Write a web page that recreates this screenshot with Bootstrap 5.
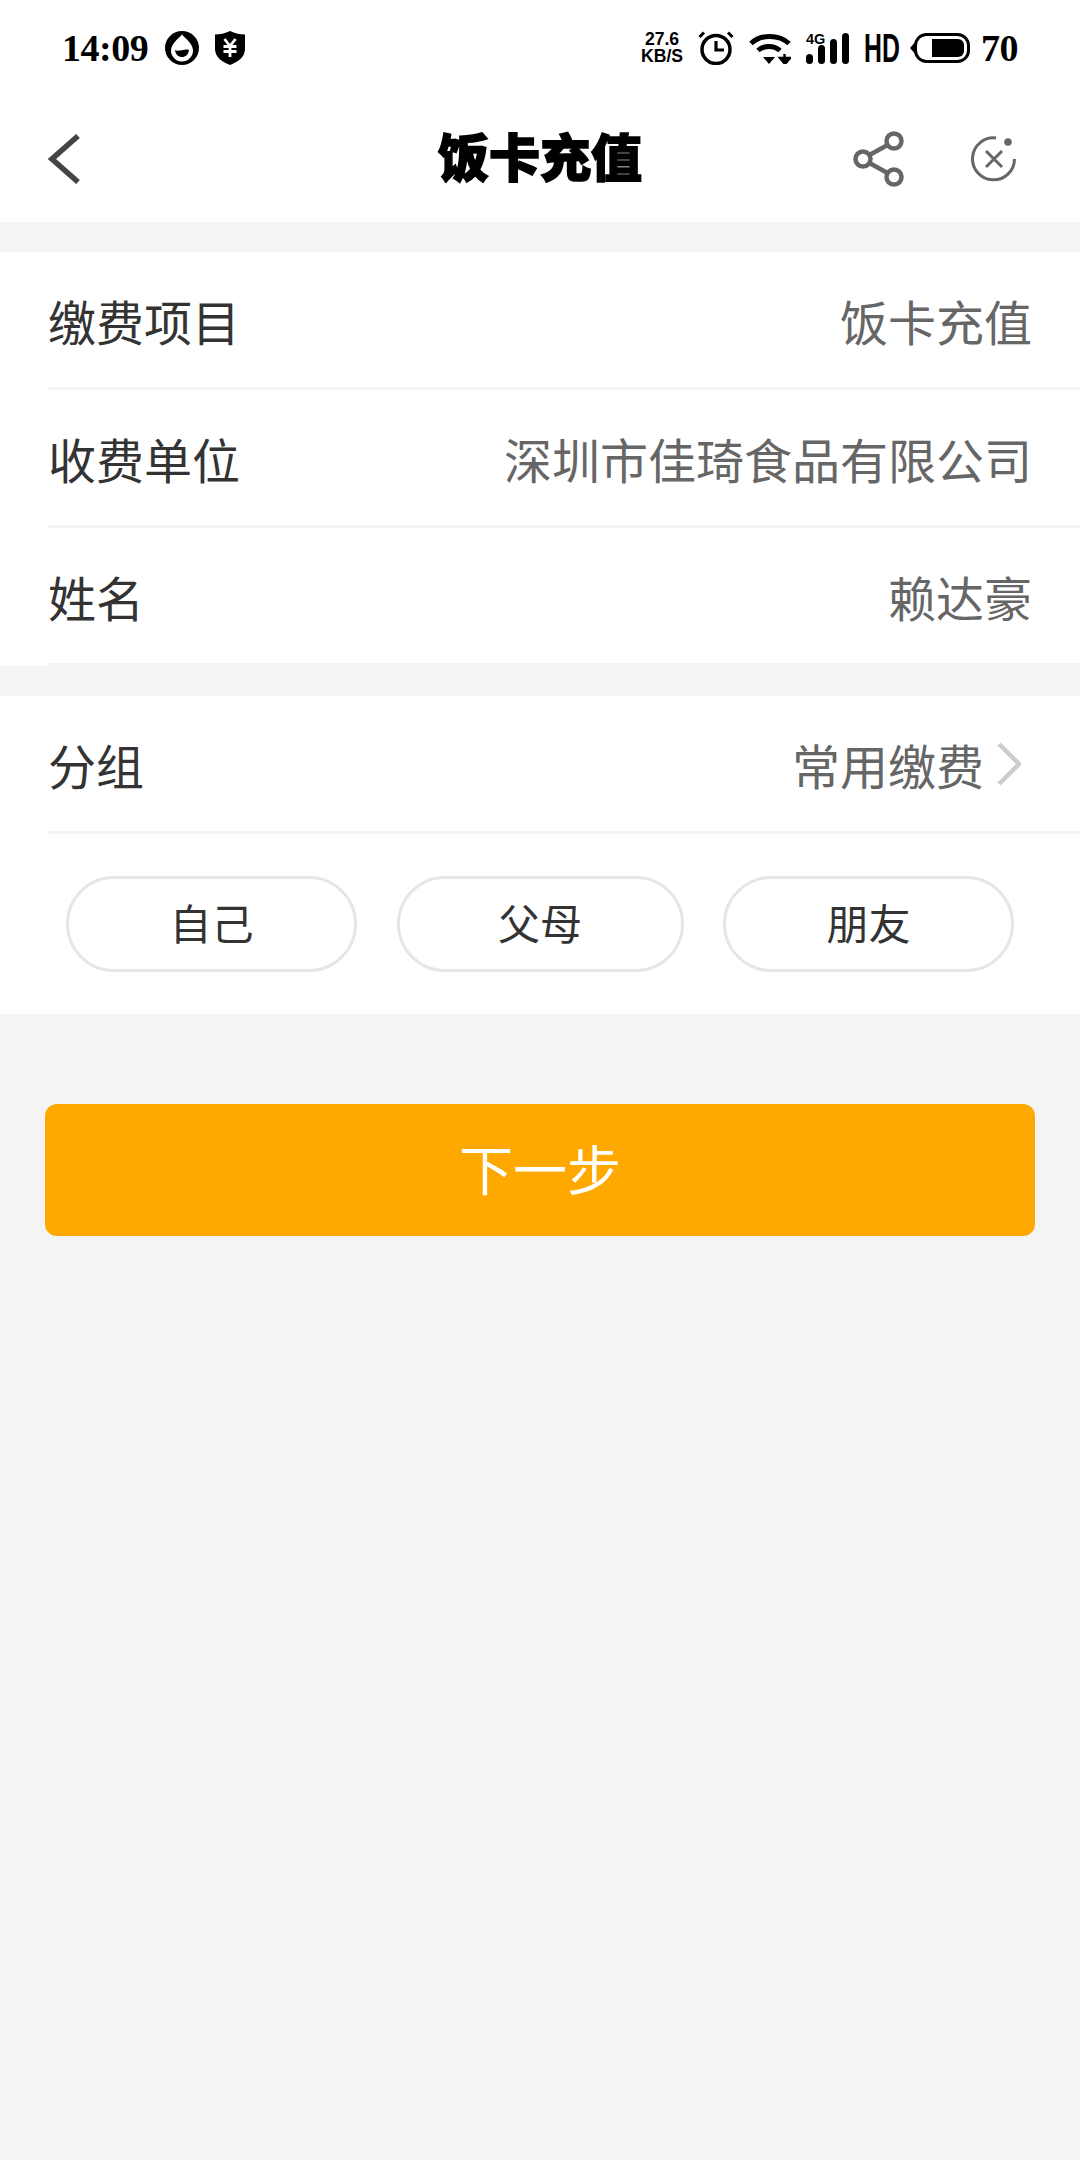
<!DOCTYPE html>
<html lang="zh">
<head>
<meta charset="utf-8">
<title>饭卡充值</title>
<link href="https://cdn.jsdelivr.net/npm/bootstrap@5.3.0/dist/css/bootstrap.min.css" rel="stylesheet">
<style>
html, body { background: #f4f4f4; }
body { width: 1080px; height: 2160px; overflow: hidden; font-family: "Noto Sans CJK SC", "Liberation Sans", sans-serif; }
svg { display: block; flex: none; }
.stat-bar { height: 96px; padding: 0 62px 0 62px; color: #000; }
.stat-time { font: 700 38px/1 "Liberation Serif", serif; letter-spacing: -.5px; }
.stat-group-left { gap: 17px; }
.stat-icons-left { gap: 16px; }
.stat-group-right { gap: 15px; }
.net-speed { width: 42px; font-family: "Liberation Sans", sans-serif; font-weight: 700; font-size: 17.6px; text-align: center; line-height: 17px; }
.sig-ico { margin-top: -3px; }
.hd-text { width: 31px; font: 700 40px/1 "Liberation Sans", sans-serif; transform: scaleX(.62); transform-origin: left center; white-space: nowrap; }
.batt-ico { margin-right: -4px; }
.nav-head { height: 126px; padding: 0 48px; }
.nav-side { flex: 1 1 0; }
.nav-right { gap: 67px; }
.close-ico { margin-right: 15px; }
.nav-title { margin-bottom: 8px; font-size: 51px; line-height: 1; font-weight: 900; color: #000; -webkit-text-stroke: 1.5px #000; }
.form-block { margin-top: 30px; }
.form-line { height: 138px; margin-left: 48px; padding-right: 48px; border-bottom: 3px solid #f4f4f4; font-size: 48px; line-height: 1; }
.form-key { color: #333; }
.form-val { color: #666; }
.chev-gap { gap: 13px; margin-right: 11px; }
.pill-row { padding: 42px 66px; }
.pill-btn { width: 291px; height: 96px; padding: 0 0 5px; border: 3px solid #e6e6e6; background: #fff; color: #333; font-size: 42px; line-height: 1; }
.pill-mid { width: 287px; }
.next-wrap { padding: 90px 45px 0; }
.next-btn { height: 132px; padding: 0 0 4px; border: 0; border-radius: 12px; background: #ffa900; color: #fff; font-size: 54px; line-height: 1; }
</style>
</head>
<body>
<div class="bg-white">
  <div class="stat-bar d-flex justify-content-between align-items-center">
    <div class="stat-group-left d-flex align-items-center">
      <span class="stat-time">14:09</span>
      <div class="stat-icons-left d-flex align-items-center">
        <svg width="34" height="34" viewBox="0 0 34 34"><circle cx="17" cy="17" r="17" fill="#000"/><path d="M17 3.500 C21 8 28 13 28 19.500 A11 11 0 0 1 6 19.500 C6 13 13 8 17 3.500Z" fill="#fff"/><path d="M10 19 C13 21.500 20 17 24 19 C23.500 23.500 20.500 26 17 26 C13.500 26 10.500 23.500 10 19Z" fill="#000"/></svg>
        <svg width="30" height="34" viewBox="0 0 30 34"><path d="M15 0 C20 2.500 25 3.500 30 3.500 V18 C30 26 23 31 15 34 C7 31 0 26 0 18 V3.500 C5 3.500 10 2.500 15 0Z" fill="#000"/><path d="M9.500 8 L15 15 L20.500 8 M8.500 15.500 H21.500 M8.500 20.500 H21.500 M15 15 V26" fill="none" stroke="#fff" stroke-width="2.800"/></svg>
      </div>
    </div>
    <div class="stat-group-right d-flex align-items-center">
      <div class="net-speed"><div>27.6</div><div>KB/S</div></div>
      <svg width="36" height="34" viewBox="0 0 36 34"><circle cx="18" cy="18.500" r="14" fill="none" stroke="#000" stroke-width="3.500"/><path d="M18 10 V19 H26" fill="none" stroke="#000" stroke-width="3.200"/><path d="M1.500 6 L6 1.500 M34.500 6 L30 1.500" stroke="#000" stroke-width="3"/></svg>
      <svg width="42" height="31" viewBox="0 0 42 31"><path d="M2 10.500 C12 1 30 1 40 10.500" fill="none" stroke="#000" stroke-width="5"/><path d="M9 17.500 C15 12 25 12 31 17.500" fill="none" stroke="#000" stroke-width="5"/><path d="M14 24 H26 L20 31Z" fill="#000"/><path d="M35.500 21 V27 M31 25 H41 L36 31Z" stroke="#000" stroke-width="2.400" fill="#000"/></svg>
      <svg class="sig-ico" width="43" height="34" viewBox="0 -3 43 34"><text x="0" y="11" font-family="Liberation Sans, sans-serif" font-weight="700" font-size="14.500">4G</text><rect x="0" y="21" width="7" height="10" rx="3.500"/><rect x="12" y="12" width="7" height="19" rx="3.500"/><rect x="24" y="6" width="7" height="25" rx="3.500"/><rect x="36" y="0" width="7" height="31" rx="3.500"/></svg>
      <div class="hd-text">HD</div>
      <svg class="batt-ico" width="60" height="30" viewBox="0 0 60 30"><path d="M4.500 11 L1 15 L4.500 19Z" fill="#000" stroke="#000" stroke-width="1.500"/><rect x="5.500" y="1.500" width="53" height="27" rx="11" fill="none" stroke="#000" stroke-width="3"/><path d="M22 6 H48 A6 6 0 0 1 54 12 V18 A6 6 0 0 1 48 24 H22Z" fill="#000"/></svg>
      <span class="stat-time">70</span>
    </div>
  </div>
  <div class="nav-head d-flex align-items-center">
    <div class="nav-side d-flex">
      <svg width="32" height="50" viewBox="0 0 32 50"><path d="M30 2 L4 25 L30 48" fill="none" stroke="#444" stroke-width="5.500"/></svg>
    </div>
    <div class="nav-title">饭卡充值</div>
    <div class="nav-side nav-right d-flex justify-content-end align-items-center">
      <svg width="52" height="56" viewBox="0 0 52 56"><g fill="none" stroke="#666" stroke-width="4.500"><circle cx="42" cy="10" r="7.500"/><circle cx="11" cy="28" r="7.500"/><circle cx="42" cy="46" r="7.500"/><path d="M17.500 24 L35.500 14 M17.500 32 L35.500 42"/></g></svg>
      <svg class="close-ico" width="46" height="46" viewBox="0 0 46 46"><path d="M43.500 23 A21 21 0 1 1 25 2" fill="none" stroke="#666" stroke-width="3"/><circle cx="37" cy="6" r="3.800" fill="#666"/><path d="M15 15 L31 31 M31 15 L15 31" stroke="#666" stroke-width="3"/></svg>
    </div>
  </div>
</div>

<div class="form-block bg-white">
  <div class="form-line d-flex justify-content-between align-items-center"><span class="form-key">缴费项目</span><span class="form-val">饭卡充值</span></div>
  <div class="form-line d-flex justify-content-between align-items-center"><span class="form-key">收费单位</span><span class="form-val">深圳市佳琦食品有限公司</span></div>
  <div class="form-line d-flex justify-content-between align-items-center"><span class="form-key">姓名</span><span class="form-val">赖达豪</span></div>
</div>

<div class="form-block bg-white">
  <div class="form-line d-flex justify-content-between align-items-center"><span class="form-key">分组</span><span class="chev-gap d-flex align-items-center"><span class="form-val">常用缴费</span><svg width="24" height="44" viewBox="0 0 24 44"><path d="M2 2 L22 22 L2 42" fill="none" stroke="#ccc" stroke-width="4.500"/></svg></span></div>
  <div class="pill-row d-flex justify-content-between">
    <button type="button" class="btn rounded-pill pill-btn">自己</button>
    <button type="button" class="btn rounded-pill pill-btn pill-mid">父母</button>
    <button type="button" class="btn rounded-pill pill-btn">朋友</button>
  </div>
</div>

<div class="next-wrap">
  <button type="button" class="btn next-btn w-100">下一步</button>
</div>
<script src="https://cdn.jsdelivr.net/npm/bootstrap@5.3.0/dist/js/bootstrap.bundle.min.js"></script>
</body>
</html>
